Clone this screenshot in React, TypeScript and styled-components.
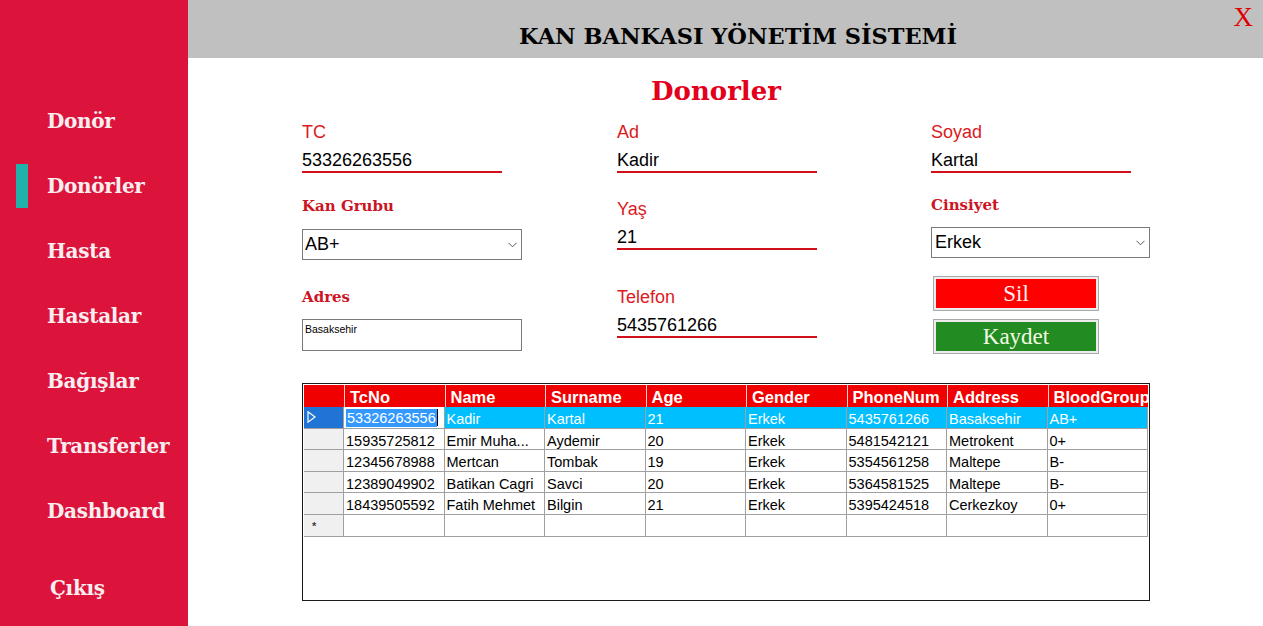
import React from 'react';
import styled, { createGlobalStyle } from 'styled-components';

const SERIF = `"DejaVu Serif", "Liberation Serif", serif`;
const TIMES = `"Liberation Serif", "Times New Roman", serif`;
const SANS = `"Liberation Sans", Arial, sans-serif`;

const GlobalStyle = createGlobalStyle`
  html, body {
    margin: 0;
    padding: 0;
    background: #fff;
    overflow: hidden;
  }
  * {
    box-sizing: border-box;
  }
`;

const Shell = styled.div`
  display: flex;
  width: 1263px;
  height: 626px;
`;

const Sidebar = styled.nav`
  flex: 0 0 188px;
  background: #dc143c;
  display: flex;
  flex-direction: column;
  padding-top: 88px;
`;

const NavItem = styled.div<{ $push?: number; $indent?: number }>`
  height: 65px;
  display: flex;
  align-items: center;
  margin-top: ${({ $push }) => $push ?? 0}px;
  padding-left: ${({ $indent }) => $indent ?? 0}px;
  font-family: ${SERIF};
  font-weight: bold;
  font-size: 20px;
  letter-spacing: -0.3px;
  color: #f8eef0;
  cursor: pointer;
`;

const Marker = styled.span<{ $on: boolean }>`
  width: 12px;
  height: 44px;
  margin: 0 19px 0 16px;
  background: ${({ $on }) => ($on ? '#20b2aa' : 'transparent')};
`;

const Main = styled.main`
  flex: 1;
  display: flex;
  flex-direction: column;
`;

const TopBar = styled.header`
  position: relative;
  height: 58px;
  background: #c0c0c0;
  display: flex;
  align-items: center;
  justify-content: center;
  padding: 13px 0 0 25px;
`;

const Title = styled.h1`
  margin: 0;
  font-family: ${SERIF};
  font-weight: bold;
  font-size: 22.5px;
  color: #000;
`;

const Close = styled.span`
  position: absolute;
  top: 4px;
  right: 10px;
  font-family: ${TIMES};
  font-size: 27px;
  line-height: 27px;
  color: #e00000;
  cursor: pointer;
`;

const Content = styled.section`
  padding-left: 114px;
`;

const Heading = styled.h2`
  width: 847px;
  margin: 18px 0 0;
  padding-right: 19px;
  text-align: center;
  font-family: ${SERIF};
  font-weight: bold;
  font-size: 26px;
  line-height: 30px;
  color: #e3001b;
`;

const Form = styled.div`
  display: grid;
  grid-template-columns: 315px 314px 220px;
  margin-top: 16px;
`;

const Column = styled.div`
  display: flex;
  flex-direction: column;
  align-items: flex-start;
`;

const Label = styled.label<{ $top?: number }>`
  margin-top: ${({ $top }) => $top ?? 0}px;
  font-family: ${SANS};
  font-size: 18px;
  line-height: 20px;
  color: #db1a22;
`;

const SerifLabel = styled.label<{ $top?: number }>`
  margin-top: ${({ $top }) => $top ?? 0}px;
  font-family: ${SERIF};
  font-weight: bold;
  font-size: 15px;
  line-height: 18px;
  color: #cc1424;
`;

const LineInput = styled.div`
  width: 200px;
  height: 24px;
  margin-top: 7px;
  border-bottom: 2px solid #d0101a;
  font-family: ${SANS};
  font-size: 18px;
  line-height: 22px;
  color: #000;
`;

const SelectBox = styled.div<{ $top: number; $w: number; $pad: number }>`
  width: ${({ $w }) => $w}px;
  height: 31px;
  margin-top: ${({ $top }) => $top}px;
  border: 1px solid #7a7a7a;
  display: flex;
  align-items: center;
  justify-content: space-between;
  padding: 0 4px 0 ${({ $pad }) => $pad}px;
  font-family: ${SANS};
  font-size: 18px;
  color: #000;
  background: #fff;
`;

const TextArea = styled.div`
  width: 220px;
  height: 32px;
  margin-top: 13px;
  border: 1px solid #7a7a7a;
  padding: 3px 0 0 2px;
  font-family: ${SANS};
  font-size: 10.5px;
  line-height: 12px;
  color: #000;
`;

const ActionButton = styled.button<{ $bg: string; $fg: string; $top: number }>`
  width: 166px;
  height: 35px;
  margin: ${({ $top }) => $top}px 0 0 2px;
  padding: 0;
  border: 1px solid #a9a9a9;
  box-shadow: inset 0 0 0 2px #ececec;
  background: ${({ $bg }) => $bg};
  color: ${({ $fg }) => $fg};
  font-family: ${TIMES};
  font-size: 23px;
  line-height: 33px;
  cursor: pointer;
`;

const Grid = styled.div`
  width: 848px;
  height: 218px;
  margin-top: 29px;
  border: 1px solid #1a1a1a;
  padding: 1px;
  background: #fff;
  overflow: hidden;
`;

const GridRow = styled.div<{ $selected?: boolean }>`
  display: grid;
  grid-template-columns: 40px repeat(8, 1fr);
  height: 21.6px;
  background: ${({ $selected }) => ($selected ? '#00bfff' : '#fff')};
  color: ${({ $selected }) => ($selected ? '#fff' : '#000')};
  font-family: ${SANS};
  font-size: 14.5px;
`;

const HeadRow = styled(GridRow)`
  height: 22px;
  background: #f00000;
  color: #fff;
  font-weight: bold;
  font-size: 16.5px;
`;

const HeadCell = styled.div`
  padding: 1.5px 0 0 5px;
  border-left: 1px solid #ffd0d0;
  line-height: 21px;
  white-space: nowrap;
  overflow: hidden;
`;

const RowHeader = styled.div<{ $current?: boolean }>`
  display: flex;
  align-items: center;
  padding-left: 3px;
  background: ${({ $current }) => ($current ? '#1f74d6' : '#f0f0f0')};
  border-right: 1px solid #a0a0a0;
  border-bottom: 1px solid #a0a0a0;
  font-size: 11px;
  font-weight: bold;
  color: #444;
`;

const Cell = styled.div`
  padding: 2px 0 0 2px;
  border-right: 1px solid #a0a0a0;
  border-bottom: 1px solid #a0a0a0;
  line-height: 21px;
  white-space: nowrap;
  overflow: hidden;
`;

const EditCell = styled(Cell)`
  display: flex;
  align-items: center;
  background: #fff;
  padding: 1px 0 0 2px;
`;

const Selection = styled.span`
  background: #3399ff;
  color: #fff;
  line-height: 18px;
  padding: 0 1px;
`;

const Caret = styled.span`
  width: 1px;
  height: 17px;
  background: #000;
`;

const NewRowMark = styled.span`
  margin: 2px 0 0 5px;
`;

const Chevron = () => (
  <svg width="9" height="6" viewBox="0 0 9 6">
    <polyline points="0.5,0.8 4.5,4.8 8.5,0.8" fill="none" stroke="#555" strokeWidth="1" />
  </svg>
);

const Pointer = () => (
  <svg width="9" height="12" viewBox="0 0 9 12">
    <polygon points="1,0.8 8,6 1,11.2" fill="none" stroke="#fff" strokeWidth="1.2" />
  </svg>
);

const navLinks = ['Donör', 'Donörler', 'Hasta', 'Hastalar', 'Bağışlar', 'Transferler', 'Dashboard'];

const columns = ['TcNo', 'Name', 'Surname', 'Age', 'Gender', 'PhoneNum', 'Address', 'BloodGroup'];

const donors = [
  ['53326263556', 'Kadir', 'Kartal', '21', 'Erkek', '5435761266', 'Basaksehir', 'AB+'],
  ['15935725812', 'Emir Muha...', 'Aydemir', '20', 'Erkek', '5481542121', 'Metrokent', '0+'],
  ['12345678988', 'Mertcan', 'Tombak', '19', 'Erkek', '5354561258', 'Maltepe', 'B-'],
  ['12389049902', 'Batikan Cagri', 'Savci', '20', 'Erkek', '5364581525', 'Maltepe', 'B-'],
  ['18439505592', 'Fatih Mehmet', 'Bilgin', '21', 'Erkek', '5395424518', 'Cerkezkoy', '0+'],
];

const App: React.FC = () => {
  return (
    <Shell>
      <GlobalStyle />
      <Sidebar>
        {navLinks.map((link) => (
          <NavItem key={link}>
            <Marker $on={link === 'Donörler'} />
            {link}
          </NavItem>
        ))}
        <NavItem $push={12} $indent={3}>
          <Marker $on={false} />
          Çıkış
        </NavItem>
      </Sidebar>

      <Main>
        <TopBar>
          <Title>KAN BANKASI YÖNETİM SİSTEMİ</Title>
          <Close>X</Close>
        </TopBar>

        <Content>
          <Heading>Donorler</Heading>

          <Form>
            <Column>
              <Label>TC</Label>
              <LineInput>53326263556</LineInput>
              <SerifLabel $top={24}>Kan Grubu</SerifLabel>
              <SelectBox $top={14} $w={220} $pad={2}>
                AB+
                <Chevron />
              </SelectBox>
              <SerifLabel $top={28}>Adres</SerifLabel>
              <TextArea>Basaksehir</TextArea>
            </Column>

            <Column>
              <Label>Ad</Label>
              <LineInput>Kadir</LineInput>
              <Label $top={26}>Yaş</Label>
              <LineInput>21</LineInput>
              <Label $top={37}>Telefon</Label>
              <LineInput>5435761266</LineInput>
            </Column>

            <Column>
              <Label>Soyad</Label>
              <LineInput>Kartal</LineInput>
              <SerifLabel $top={23}>Cinsiyet</SerifLabel>
              <SelectBox $top={13} $w={219} $pad={3}>
                Erkek
                <Chevron />
              </SelectBox>
              <ActionButton $top={18} $bg="#ff0000" $fg="#fdeeee">
                Sil
              </ActionButton>
              <ActionButton $top={8} $bg="#228b22" $fg="#f2fbe2">
                Kaydet
              </ActionButton>
            </Column>
          </Form>

          <Grid>
            <HeadRow>
              <div />
              {columns.map((c) => (
                <HeadCell key={c}>{c}</HeadCell>
              ))}
            </HeadRow>
            {donors.map((row, i) => (
              <GridRow key={row[0]} $selected={i === 0}>
                <RowHeader $current={i === 0}>{i === 0 && <Pointer />}</RowHeader>
                {row.map((value, j) =>
                  i === 0 && j === 0 ? (
                    <EditCell key={j}>
                      <Selection>{value}</Selection>
                      <Caret />
                    </EditCell>
                  ) : (
                    <Cell key={j}>{value}</Cell>
                  ),
                )}
              </GridRow>
            ))}
            <GridRow>
              <RowHeader>
                <NewRowMark>*</NewRowMark>
              </RowHeader>
              {columns.map((c) => (
                <Cell key={c} />
              ))}
            </GridRow>
          </Grid>
        </Content>
      </Main>
    </Shell>
  );
};

export default App;
